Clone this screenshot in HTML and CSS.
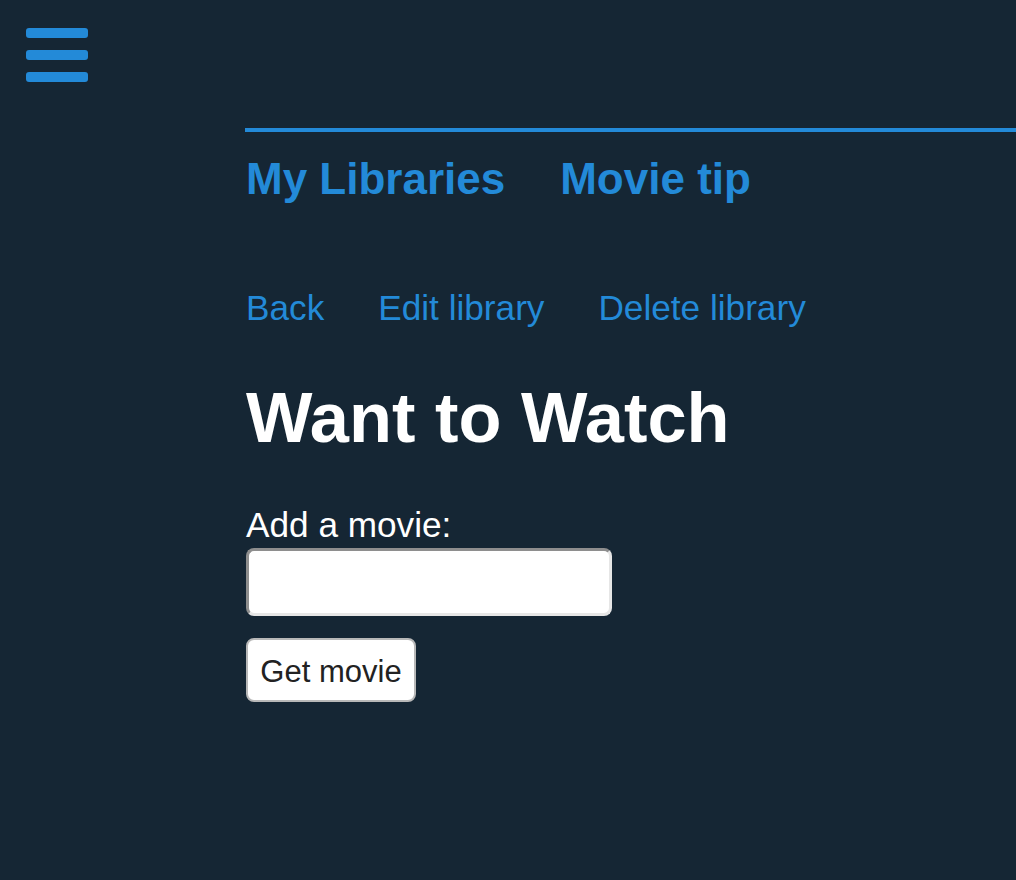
FILE: index.html
```html
<!DOCTYPE html>
<html lang="en">
<head>
<meta charset="utf-8">
<title>Want to Watch</title>
<link rel="stylesheet" href="styles.css">
</head>
<body>
<header class="topbar">
  <button class="menu-btn" aria-label="Menu">
    <svg width="62" height="54" viewBox="0 0 62 54" aria-hidden="true">
      <rect x="0" y="0" width="62" height="10" rx="3" fill="#238ad8"/>
      <rect x="0" y="22" width="62" height="10" rx="3" fill="#238ad8"/>
      <rect x="0" y="44" width="62" height="10" rx="3" fill="#238ad8"/>
    </svg>
  </button>
</header>
<main class="content">
  <nav class="main-nav">
    <a href="#">My Libraries</a>
    <a href="#">Movie tip</a>
  </nav>
  <nav class="sub-nav">
    <a href="#">Back</a>
    <a href="#">Edit library</a>
    <a href="#">Delete library</a>
  </nav>
  <h1 class="title">Want to Watch</h1>
  <form class="add-form">
    <label class="label" for="movie">Add a movie:</label>
    <input class="text-input" id="movie" type="text">
    <button class="btn" type="button">Get movie</button>
  </form>
</main>
</body>
</html>
```

FILE: styles.css
```css
html, body {
  margin: 0;
  padding: 0;
}
body {
  background: #152634;
  font-family: "Liberation Sans", Arial, sans-serif;
  color: #ffffff;
  min-height: 880px;
}
.topbar {
  padding: 28px 0 0 26px;
  height: 100px;
  box-sizing: border-box;
}
.menu-btn {
  display: block;
  background: none;
  border: 0;
  padding: 0;
  margin: 0;
  cursor: pointer;
}
.menu-btn svg {
  display: block;
}
.content {
  margin-left: 246px;
}
.main-nav {
  margin-left: -1px;
  padding-left: 1px;
  border-top: 4px solid #238ad8;
  padding-top: 22px;
  display: flex;
  gap: 55px;
  margin-top: 28px;
}
.main-nav a {
  color: #238ad8;
  text-decoration: none;
  font-weight: bold;
  font-size: 44px;
  line-height: 50px;
}
.sub-nav {
  display: flex;
  gap: 54px;
  margin-top: 84px;
}
.sub-nav a {
  color: #238ad8;
  text-decoration: none;
  font-size: 35.2px;
  line-height: 40px;
}
.title {
  margin: 50px 0 0;
  font-size: 70.4px;
  line-height: 80px;
  font-weight: bold;
  color: #ffffff;
}
.add-form {
  display: flex;
  flex-direction: column;
  align-items: flex-start;
  margin-top: 47px;
}
.label {
  font-size: 35.2px;
  line-height: 40px;
  color: #ffffff;
}
.text-input {
  margin-top: 3px;
  width: 366px;
  height: 68px;
  box-sizing: border-box;
  background: #ffffff;
  border: 3px solid;
  border-color: #8e8e8e #e6e6e6 #e6e6e6 #8e8e8e;
  border-radius: 8px;
  padding: 0 10px;
  font-size: 31px;
  font-family: "Liberation Sans", Arial, sans-serif;
  outline: none;
}
.btn {
  margin-top: 22px;
  width: 170px;
  height: 64px;
  box-sizing: border-box;
  background: #ffffff;
  border: 2px solid #b8b8b8;
  border-radius: 8px;
  color: #222222;
  font-family: "Liberation Sans", Arial, sans-serif;
  font-size: 31px;
  line-height: 36px;
  padding: 3px 0 0;
  display: flex;
  align-items: center;
  justify-content: center;
  cursor: pointer;
}
```
